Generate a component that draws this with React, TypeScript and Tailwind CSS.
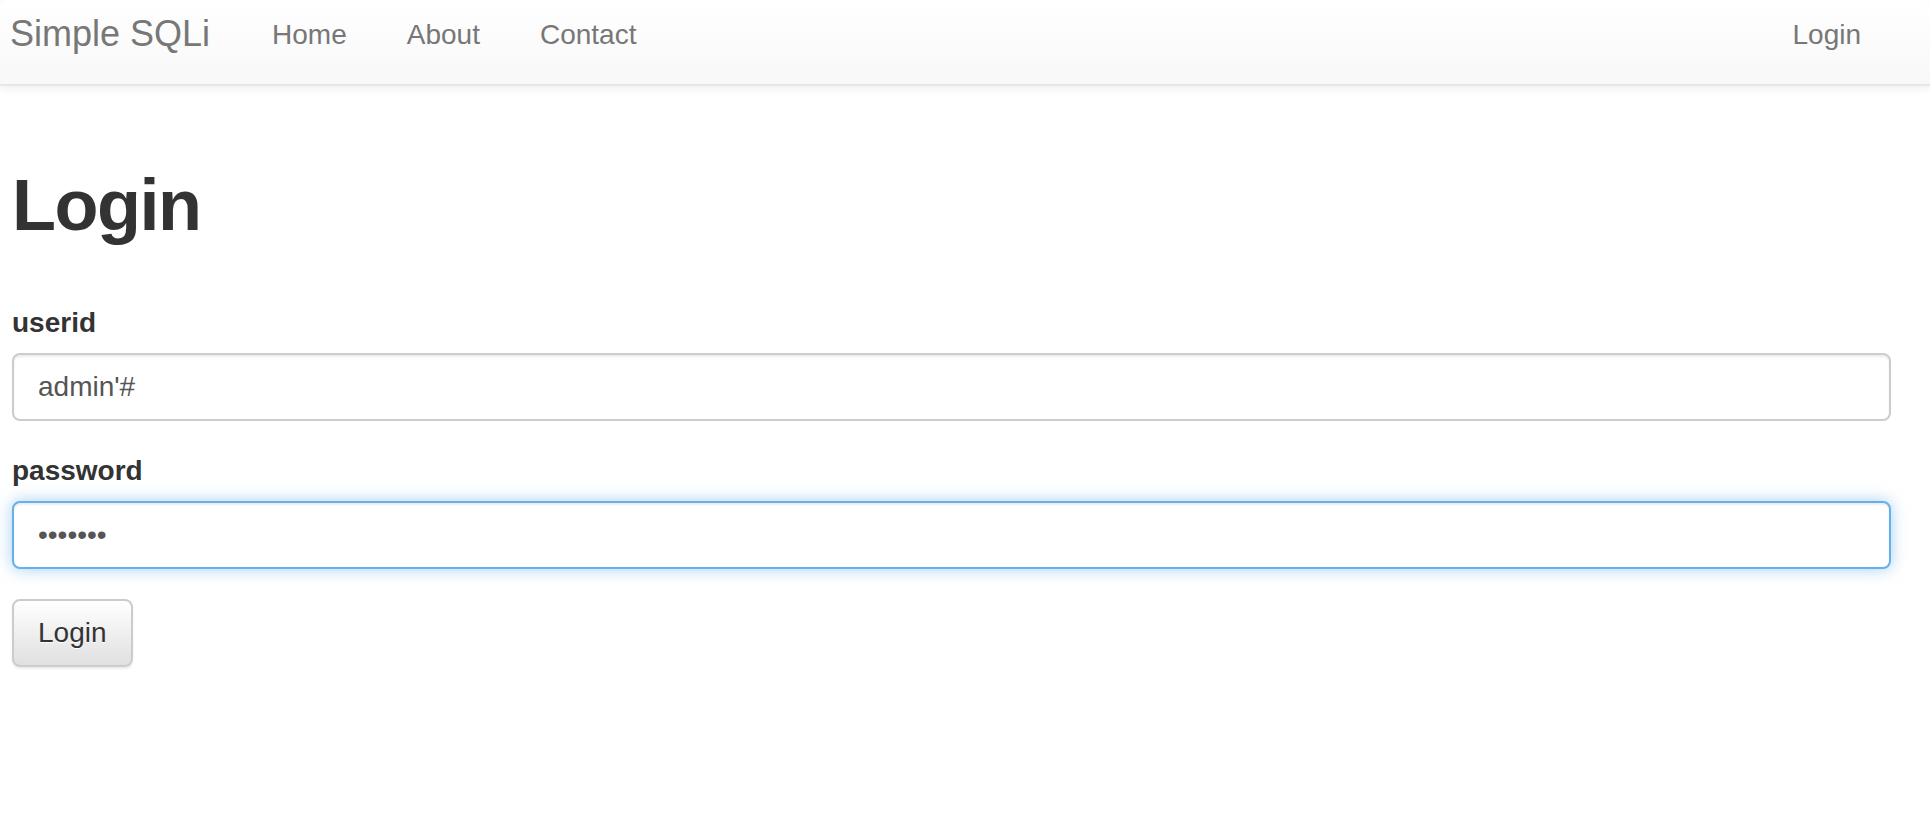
const NavLink = ({ label }: { label: string }) => (
  <li>
    <a href="#" className="block px-[30px] text-[28px] leading-[40px] text-[#777]">
      {label}
    </a>
  </li>
);

const App = () => {
  return (
    <div className="min-h-[814px] bg-white font-['Liberation_Sans',Arial,sans-serif] text-[#333]">
      <nav className="flex h-[86px] items-start justify-between rounded-t-[8px] border-b-2 border-[#e7e7e7] bg-gradient-to-b from-white to-[#f8f8f8] pt-[14px] shadow-[0_2px_10px_rgba(0,0,0,0.075)]">
        <div className="flex items-start">
          <a href="#" className="pl-[10px] text-[36px] leading-[40px] text-[#777]">
            Simple SQLi
          </a>
          <ul className="ml-[32px] mt-[1px] flex">
            <NavLink label="Home" />
            <NavLink label="About" />
            <NavLink label="Contact" />
          </ul>
        </div>
        <ul className="mt-[1px] flex pr-[39px]">
          <NavLink label="Login" />
        </ul>
      </nav>

      <main className="pl-[12px] pr-[39px]">
        <h1 className="mt-[80px] text-[72px] font-bold leading-[79px] tracking-[-1.5px] text-[#333]">
          Login
        </h1>

        <form className="mt-[58px]" onSubmit={(e) => e.preventDefault()}>
          <div className="mb-[30px]">
            <label className="mb-[10px] block text-[28px] font-bold leading-[40px]">userid</label>
            <input
              type="text"
              defaultValue="admin'#"
              className="block h-[68px] w-full rounded-[8px] border-2 border-[#ccc] bg-white px-[24px] text-[28px] text-[#555] shadow-[inset_0_2px_2px_rgba(0,0,0,0.075)] outline-none"
            />
          </div>
          <div className="mb-[30px]">
            <label className="mb-[10px] block text-[28px] font-bold leading-[40px]">password</label>
            <input
              type="password"
              defaultValue="1234567"
              className="block h-[68px] w-full rounded-[8px] border-2 border-[#66afe9] bg-white px-[24px] text-[28px] text-[#555] shadow-[inset_0_2px_2px_rgba(0,0,0,0.075),0_0_16px_rgba(102,175,233,0.6)] outline-none"
            />
          </div>
          <button
            type="submit"
            className="h-[68px] rounded-[8px] border-2 border-[#ccc] bg-gradient-to-b from-white to-[#e0e0e0] px-[24px] text-[28px] leading-[40px] text-[#333] shadow-[0_2px_2px_rgba(0,0,0,0.075)] [text-shadow:0_1px_0_#fff]"
          >
            Login
          </button>
        </form>
      </main>
    </div>
  );
};

export default App;
